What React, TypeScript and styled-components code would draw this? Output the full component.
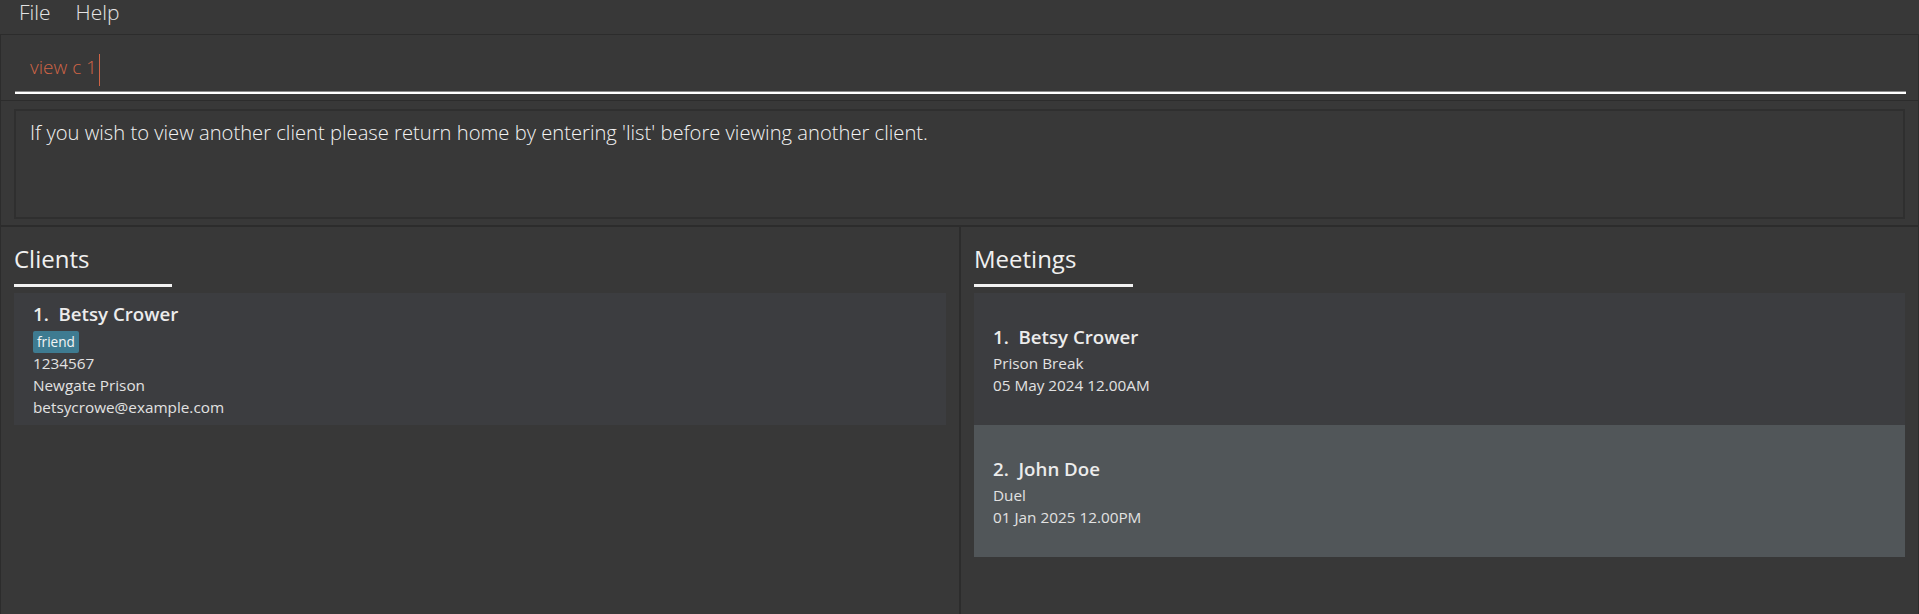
import React from "react";
import styled, { createGlobalStyle } from "styled-components";

const Global = createGlobalStyle`
  html, body { margin: 0; padding: 0; background: #383838; }
  body { width: 1919px; height: 614px; overflow: hidden; font-family: "Open Sans", "Noto Sans", sans-serif; }
  #root { height: 614px; }
`;

const Shell = styled.div`
  display: flex;
  flex-direction: column;
  height: 614px;
  background: #383838;
  color: #e8e8e8;
`;

const MenuBar = styled.div`
  height: 35px;
  display: flex;
  align-items: center;
  gap: 25px;
  padding-left: 19px;
  padding-bottom: 10px;
  box-sizing: border-box;
  border-bottom: 1px solid #2c2c2c;
  font-size: 21px;
  font-weight: 300;
  line-height: 26px;
  color: #e4e4e4;
`;

const MenuItem = styled.span``;

const CommandSection = styled.div`
  height: 66px;
  box-sizing: border-box;
  border: 1px solid #2c2c2c;
  border-top: none;
  padding: 0 12px 6px 14px;
  display: flex;
  flex-direction: column;
  justify-content: flex-end;
`;

const CommandInput = styled.div`
  display: flex;
  align-items: center;
  padding-left: 15px;
  padding-bottom: 11px;
  height: 28px;
  font-size: 19px;
  font-weight: 300;
  color: #cf6446;
  border-bottom: 2px solid #ffffff;
  box-shadow: inset 0 -1px 0 0 #8a8a8a;
`;

const Caret = styled.span`
  display: inline-block;
  width: 1px;
  height: 32px;
  background: #cf6446;
  margin-left: 2px;
  margin-top: 5px;
`;

const ResultSection = styled.div`
  height: 126px;
  box-sizing: border-box;
  padding: 8px 13px 6px 13px;
  border-left: 1px solid #2c2c2c;
  border-right: 1px solid #2c2c2c;
  border-bottom: 2px solid #2c2c2c;
  display: flex;
`;

const ResultBox = styled.div`
  flex: 1;
  border: 2px solid #2f2f2f;
  padding: 7px 14px;
  font-size: 20.2px;
  font-weight: 300;
  color: #f2f2f2;
  line-height: 28px;
`;

const Panels = styled.div`
  flex: 1;
  display: grid;
  grid-template-columns: 959px 1fr;
  border-right: 1px solid #2c2c2c;
`;

const Panel = styled.div<{ $divider?: boolean }>`
  display: flex;
  flex-direction: column;
  padding: 16px 13px 0 13px;
  border-left: ${(p) => (p.$divider ? "2px solid #2c2c2c" : "1px solid #2c2c2c")};
  min-width: 0;
`;

const Heading = styled.h2`
  margin: 0;
  font-size: 24px;
  font-weight: 400;
  line-height: 32px;
  color: #f0f0f0;
`;

const HeadingRule = styled.div<{ $w: number }>`
  width: ${(p) => p.$w}px;
  height: 3px;
  background: #f2f2f2;
  margin-top: 9px;
  margin-bottom: 6px;
`;

const List = styled.div`
  display: flex;
  flex-direction: column;
`;

const ClientCard = styled.div`
  background: #3c3d40;
  padding: 6px 19px 7px 19px;
  display: flex;
  flex-direction: column;
  align-items: flex-start;
`;

const MeetingCard = styled.div<{ $selected?: boolean }>`
  background: ${(p) => (p.$selected ? "#515659" : "#3c3d40")};
  height: 132px;
  box-sizing: border-box;
  padding: 0 19px;
  display: flex;
  flex-direction: column;
  justify-content: center;
`;

const Name = styled.div`
  font-size: 18.7px;
  font-weight: 600;
  line-height: 30px;
  color: #ececec;
  white-space: pre;
`;

const Line = styled.div`
  font-size: 15.3px;
  line-height: 22px;
  color: #e2e2e2;
`;

const Tag = styled.span`
  display: inline-block;
  background: #3e7b91;
  color: #f4f4f4;
  font-size: 13.6px;
  line-height: 20px;
  padding: 1px 4px;
  border-radius: 2px;
  margin: 2px 0 -1px 0;
`;

export default function App() {
  return (
    <Shell>
      <Global />
      <MenuBar>
        <MenuItem>File</MenuItem>
        <MenuItem>Help</MenuItem>
      </MenuBar>
      <CommandSection>
        <CommandInput>
          view c 1<Caret />
        </CommandInput>
      </CommandSection>
      <ResultSection>
        <ResultBox>
          If you wish to view another client please return home by entering 'list' before viewing another client.
        </ResultBox>
      </ResultSection>
      <Panels>
        <Panel>
          <Heading>Clients</Heading>
          <HeadingRule $w={158} />
          <List>
            <ClientCard>
              <Name>{"1.  Betsy Crower"}</Name>
              <Tag>friend</Tag>
              <Line>1234567</Line>
              <Line>Newgate Prison</Line>
              <Line>betsycrowe@example.com</Line>
            </ClientCard>
          </List>
        </Panel>
        <Panel $divider>
          <Heading>Meetings</Heading>
          <HeadingRule $w={159} />
          <List>
            <MeetingCard>
              <Name>{"1.  Betsy Crower"}</Name>
              <Line>Prison Break</Line>
              <Line>05 May 2024 12.00AM</Line>
            </MeetingCard>
            <MeetingCard $selected>
              <Name>{"2.  John Doe"}</Name>
              <Line>Duel</Line>
              <Line>01 Jan 2025 12.00PM</Line>
            </MeetingCard>
          </List>
        </Panel>
      </Panels>
    </Shell>
  );
}
